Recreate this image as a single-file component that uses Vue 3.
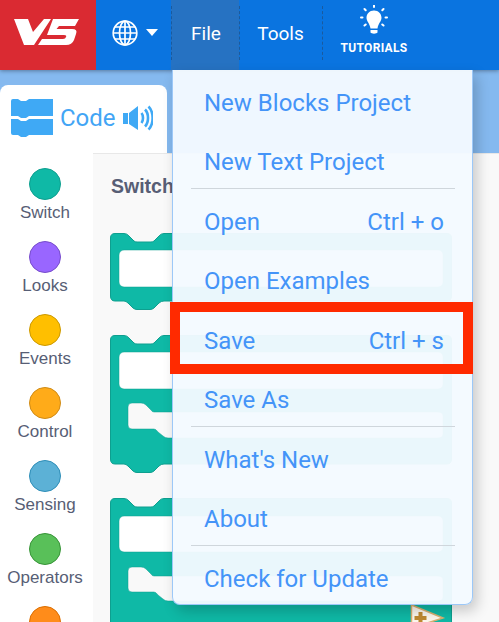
<script setup>
const categories = [
  { name: 'Switch', color: '#0fb9a6', edge: '#0e9f8f' },
  { name: 'Looks', color: '#9966ff', edge: '#774dcb' },
  { name: 'Events', color: '#ffbf00', edge: '#cc9900' },
  { name: 'Control', color: '#ffab19', edge: '#cf8b17' },
  { name: 'Sensing', color: '#5cb1d6', edge: '#2e8eb8' },
  { name: 'Operators', color: '#59c059', edge: '#389438' },
  { name: '', color: '#ff8c1a', edge: '#db6e00' }
]

const menu = [
  { label: 'New Blocks Project' },
  { label: 'New Text Project', line: true },
  { label: 'Open', key: 'Ctrl + o' },
  { label: 'Open Examples' },
  { label: 'Save', key: 'Ctrl + s' },
  { label: 'Save As', line: true },
  { label: "What's New" },
  { label: 'About', line: true },
  { label: 'Check for Update' }
]
</script>

<template>
  <div class="page">
    <header class="bar">
      <div class="logo">
        <svg width="96" height="70" viewBox="0 0 96 70">
          <path fill="#fff" d="M14 19H28L33 32 44 19H51L34 45H24Z" />
          <path fill="#fff" d="M53 19H79L75 26H59L56.500 29H72Q78 29 76 34L74 40Q72 45 66 45H38L42 39H63Q65.500 39 66 37 67 35 64 35H47Z" />
        </svg>
      </div>
      <div class="lang">
        <svg width="26" height="26" viewBox="0 0 26 26" fill="none" stroke="#fff" stroke-width="1.700">
          <circle cx="13" cy="13" r="11.800" />
          <ellipse cx="13" cy="13" rx="5.500" ry="11.800" />
          <path d="M13 1V25M1.500 13H24.500M3 7H23M3 19H23" />
        </svg>
        <span class="caret"></span>
      </div>
      <div class="tab file">File</div>
      <div class="tab tools">Tools</div>
      <div class="tab tutorials">
        <svg width="28" height="34" viewBox="0 0 28 34">
          <path fill="#fff" d="M14 5.500C9.500 5.500 6.500 9 6.500 12.800 6.500 16.500 9.800 18.500 10.500 23.500H17.500C18.200 18.500 21.500 16.500 21.500 12.800 21.500 9 18.500 5.500 14 5.500ZM10.500 25H17.500V27.500C16.500 29 11.500 29 10.500 27.500Z" />
          <path stroke="#fff" stroke-width="2" stroke-linecap="round" d="M14 0.500V2M4.500 4L5.700 5.200M23.500 4L22.300 5.200M1 12.500H2.500M25.500 12.500H27M4.500 20.500L5.700 19.500M23.500 20.500L22.300 19.500" />
        </svg>
        <span>TUTORIALS</span>
      </div>
    </header>

    <main class="main">
      <div class="code-tab">
        <svg width="42" height="38" viewBox="0 0 42 38">
          <path fill="#3fa9f5" d="M0 2Q0 0 2 0H7L10 2H15L18 0H42V17H18L15 19H10L7 17H0ZM0 20H7L10 22H15L18 20H42V36H18L15 38H10L7 36H2Q0 36 0 34Z" />
        </svg>
        <span class="code-label">Code</span>
        <svg width="30" height="26" viewBox="0 0 30 26" fill="none">
          <path fill="#3fa9f5" d="M0 8H5V19H0ZM6 8L15 1V25L6 19Z" />
          <path stroke="#3fa9f5" stroke-width="2.600" d="M18.500 8C20.500 10.500 20.500 15.500 18.500 18M22 4.500C26 8.500 26 17.500 22 21.500M25.500 1.500C31 7 31 19 25.500 24.500" />
        </svg>
      </div>
      <div class="work">
        <ul class="cats">
          <li v-for="c in categories" :key="c.color" class="cat">
            <span class="dot" :style="{ background: c.color, borderColor: c.edge }"></span>
            <span v-if="c.name">{{ c.name }}</span>
          </li>
        </ul>
        <section class="flyout">
          <h2>Switch</h2>
          <svg class="block" width="342" height="77" viewBox="0 0 342 77">
            <path class="teal" d="M.5 5Q.5.500 5 .500H14Q17 .500 19 3L24 8Q25 9 27 9H41Q43 9 44 8L49 3Q51 .500 54 .500H337Q341.500.500 341.500 5V63Q341.500 68 337 68H54Q51 68 49 70L44 75Q42 76.500 40 76.500H27Q25 76.500 23 75L18 70Q16 68 14 68H5Q.5 68 .5 63Z" />
            <rect class="slot" x="9" y="17" width="324" height="37" rx="5" />
          </svg>
          <svg class="block" width="342" height="138" viewBox="0 0 342 138">
            <path class="teal" d="M.5 5Q.5.500 5 .500H14Q17 .500 19 3L24 8Q25 9 27 9H41Q43 9 44 8L49 3Q51 .500 54 .500H337Q341.500.500 341.500 5V124Q341.500 129 337 129H54Q51 129 49 131L44 136Q42 137.500 40 137.500H27Q25 137.500 23 136L18 131Q16 129 14 129H5Q.5 129 .5 124Z" />
            <rect class="slot" x="9" y="17" width="324" height="37" rx="5" />
            <path class="notch" d="M18 72Q18 68 22 68H31Q34 68 36 70L41 75Q42 77 44 77H327Q333 77 333 81V99Q333 103 327 103H58Q55 103 53 101L48 97Q46 94 44 94H22Q18 94 18 90Z" />
          </svg>
          <svg class="block" width="342" height="130" viewBox="0 0 342 130">
            <path class="teal" d="M.5 130V5Q.5.500 5 .500H14Q17 .500 19 3L24 8Q25 9 27 9H41Q43 9 44 8L49 3Q51 .500 54 .500H337Q341.500.500 341.500 5V130Z" />
            <rect class="slot" x="9" y="18" width="324" height="36" rx="5" />
            <path class="notch" d="M18 73Q18 69 22 69H31Q34 69 36 71L41 76Q42 78 44 78H327Q333 78 333 82V99Q333 103 327 103H58Q55 103 53 101L48 97Q46 94 44 94H22Q18 94 18 90Z" />
            <path fill="#fdf8ee" stroke="#d9b070" stroke-width="1.500" d="M301.500 107L333 120 301.500 130Z" />
            <path stroke="#c08a30" stroke-width="4" d="M304.500 120H316.500M310.500 114V126" />
          </svg>
        </section>
      </div>
    </main>

    <nav class="menu">
      <template v-for="item in menu" :key="item.label">
        <div class="row">
          <span>{{ item.label }}</span>
          <span v-if="item.key">{{ item.key }}</span>
        </div>
        <hr v-if="item.line" />
      </template>
    </nav>
    <div class="mark"></div>
  </div>
</template>

<style scoped>
.page {
  position: relative;
  width: 499px;
  height: 622px;
  overflow: hidden;
  background: #85b9ef;
  font-family: Roboto, sans-serif;
}

.bar {
  position: relative;
  z-index: 2;
  display: flex;
  height: 70px;
  background: #0a74e0;
  color: #fff;
  box-shadow: 0 1px 4px rgba(0, 0, 0, 0.35);
}

.logo {
  width: 96px;
  background: #da2a32;
}

.logo svg {
  display: block;
}

.lang {
  display: flex;
  align-items: center;
  gap: 8px;
  width: 75px;
  padding: 0 0 5px 16px;
  box-sizing: border-box;
}

.caret {
  width: 0;
  height: 0;
  border-left: 6.500px solid transparent;
  border-right: 6.500px solid transparent;
  border-top: 7px solid #fff;
}

.tab {
  position: relative;
  display: flex;
  align-items: center;
  justify-content: center;
  padding-bottom: 3px;
  box-sizing: border-box;
  font-size: 19px;
}

.tab::before {
  content: "";
  position: absolute;
  top: 6px;
  bottom: 10px;
  left: 0;
  border-left: 1px dashed #1a5a9e;
}

.file {
  width: 68px;
  padding-left: 2px;
  background: #2672c2;
}

.tools {
  width: 83px;
}

.tutorials {
  flex-direction: column;
  justify-content: flex-start;
  width: 104px;
  padding: 5px 0 0;
  font-size: 12px;
  font-weight: 700;
  letter-spacing: 0.3px;
}

.tutorials span {
  margin-top: 2px;
}

.tutorials svg {
  display: block;
}

.main {
  padding-top: 15px;
}

.code-tab {
  display: flex;
  align-items: center;
  gap: 7px;
  width: 167px;
  height: 68px;
  padding: 0 0 2px 11px;
  box-sizing: border-box;
  background: #fff;
  border-radius: 8px 8px 0 0;
  color: #42a5f5;
  font-size: 24px;
}

.work {
  display: flex;
  height: 469px;
}

.cats {
  flex: none;
  width: 93px;
  margin: 0;
  padding: 15px 3px 0 0;
  box-sizing: border-box;
  list-style: none;
  background: #fff;
  color: #575e75;
  font-family: "Liberation Sans", Arial, sans-serif;
  font-size: 17px;
}

.cat {
  display: flex;
  flex-direction: column;
  align-items: center;
  height: 73px;
  line-height: 18px;
}

.dot {
  flex: none;
  width: 32px;
  height: 32px;
  margin-bottom: 4px;
  border: 1px solid;
  border-radius: 50%;
  box-sizing: border-box;
}

.flyout {
  flex: 1;
  padding: 21px 0 0 17px;
  background: #f9f9f9;
  border-top: 1px solid #e8e8e8;
}

.flyout h2 {
  margin: 0 0 36px 1px;
  color: #575e75;
  font-family: "Liberation Sans", Arial, sans-serif;
  font-size: 19.500px;
  line-height: 22px;
}

.block {
  display: block;
  margin-bottom: 25px;
}

.teal {
  fill: #0fb9a6;
  stroke: #0e9f8f;
}

.slot {
  fill: #fff;
  stroke: #0e9f8f;
  stroke-width: 0.5;
}

.notch {
  fill: #f9f9f9;
  stroke: #0e9f8f;
  stroke-width: 0.5;
}

.menu {
  position: absolute;
  z-index: 3;
  top: 70px;
  left: 172px;
  width: 301px;
  height: 535px;
  padding: 3px 17px 0 18px;
  box-sizing: border-box;
  background: rgba(244, 250, 255, 0.96);
  border: 1px solid #9cc8f8;
  border-top: 0;
  border-radius: 0 0 8px 8px;
  box-shadow: 4px 6px 14px rgba(0, 0, 0, 0.2);
  color: #4494f8;
  font-size: 24px;
}

.row {
  display: flex;
  justify-content: space-between;
  align-items: center;
  height: 59.500px;
  padding: 0 11px 0 13px;
}

.menu hr {
  height: 1px;
  margin: -4px 0 3px;
  border: 0;
  background: #cfd6dc;
}

.mark {
  position: absolute;
  z-index: 4;
  top: 302px;
  left: 170px;
  width: 303px;
  height: 72px;
  box-sizing: border-box;
  border: 10px solid #ff2a00;
}
</style>
